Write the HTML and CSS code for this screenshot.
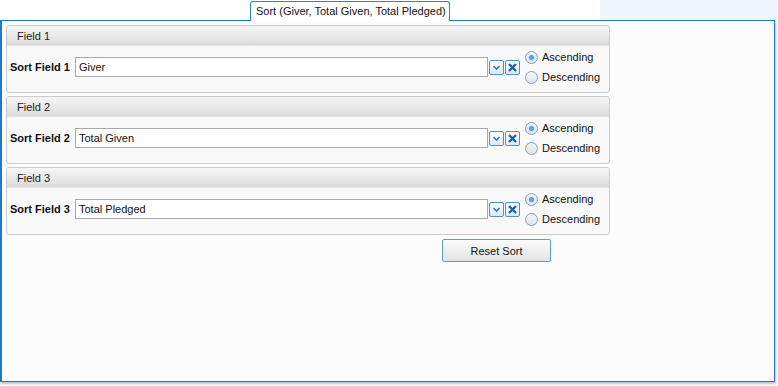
FILE: index.html
```html
<!DOCTYPE html>
<html lang="en">
<head>
    <meta charset="UTF-8">
    <title>Sort</title>
    <link rel="stylesheet" href="styles.css">
</head>
<body>
    <div class="topbar">
        <div class="tab-gap"></div>
        <div class="tab">Sort (Giver, Total Given, Total Pledged)</div>
        <div class="tab-fill"></div>
        <div class="tab-strip"></div>
    </div>

    <div class="panel">
        <div class="group">
            <div class="group-header">Field 1</div>
            <div class="group-body">
                <label class="field-label">Sort Field 1</label>
                <div class="combo">Giver</div>
                <span class="icon-btn"><svg width="13" height="13" viewBox="0 0 13 13"><path d="M3.5 5 L6.5 8 L9.5 5" fill="none" stroke="#2c7cc0" stroke-width="1.6"/></svg></span>
                <span class="icon-btn"><svg width="13" height="13" viewBox="0 0 13 13"><path d="M3 3 L10 10 M10 3 L3 10" fill="none" stroke="#1b63a8" stroke-width="2.4"/></svg></span>
                <div class="radios">
                    <div class="radio-row"><span class="radio checked"></span>Ascending</div>
                    <div class="radio-row"><span class="radio"></span>Descending</div>
                </div>
            </div>
        </div>

        <div class="group">
            <div class="group-header">Field 2</div>
            <div class="group-body">
                <label class="field-label">Sort Field 2</label>
                <div class="combo">Total Given</div>
                <span class="icon-btn"><svg width="13" height="13" viewBox="0 0 13 13"><path d="M3.5 5 L6.5 8 L9.5 5" fill="none" stroke="#2c7cc0" stroke-width="1.6"/></svg></span>
                <span class="icon-btn"><svg width="13" height="13" viewBox="0 0 13 13"><path d="M3 3 L10 10 M10 3 L3 10" fill="none" stroke="#1b63a8" stroke-width="2.4"/></svg></span>
                <div class="radios">
                    <div class="radio-row"><span class="radio checked"></span>Ascending</div>
                    <div class="radio-row"><span class="radio"></span>Descending</div>
                </div>
            </div>
        </div>

        <div class="group">
            <div class="group-header">Field 3</div>
            <div class="group-body">
                <label class="field-label">Sort Field 3</label>
                <div class="combo">Total Pledged</div>
                <span class="icon-btn"><svg width="13" height="13" viewBox="0 0 13 13"><path d="M3.5 5 L6.5 8 L9.5 5" fill="none" stroke="#2c7cc0" stroke-width="1.6"/></svg></span>
                <span class="icon-btn"><svg width="13" height="13" viewBox="0 0 13 13"><path d="M3 3 L10 10 M10 3 L3 10" fill="none" stroke="#1b63a8" stroke-width="2.4"/></svg></span>
                <div class="radios">
                    <div class="radio-row"><span class="radio checked"></span>Ascending</div>
                    <div class="radio-row"><span class="radio"></span>Descending</div>
                </div>
            </div>
        </div>

        <div class="actions">
            <button class="reset-btn">Reset Sort</button>
        </div>
    </div>
</body>
</html>
```

FILE: styles.css
```css
* {
    margin: 0;
    padding: 0;
    box-sizing: border-box;
}

body {
    font-family: 'Liberation Sans', Arial, sans-serif;
    font-size: 11px;
    color: #111;
    background: #fff;
    width: 778px;
    height: 386px;
    overflow: hidden;
}

.topbar {
    display: flex;
    height: 20px;
    padding-top: 1px;
}

.tab-gap {
    width: 250px;
}

.tab {
    position: relative;
    z-index: 1;
    width: 200px;
    height: 20px;
    background: #fff;
    border: 1px solid #2a86c8;
    border-bottom: none;
    border-radius: 3px 3px 0 0;
    padding: 3px 0 0 5px;
    white-space: nowrap;
}

.tab-fill {
    width: 150px;
}

.tab-strip {
    flex: 1;
    background: #eef5fd;
    margin-top: -1px;
}

.panel {
    width: 775px;
    height: 362px;
    background: #fcfcfc;
    border: 1px solid #1f7cc0;
    border-left-width: 2px;
    box-shadow: 1px 2px 2px rgba(60, 80, 110, 0.35);
    padding: 4px 0 0 4px;
}

.group {
    width: 604px;
    height: 68px;
    margin-bottom: 3px;
    border: 1px solid #cbcbcb;
    border-radius: 3px;
    background: #f9f9f9;
    overflow: hidden;
}

.group-header {
    height: 20px;
    padding: 4px 0 0 10px;
    color: #222;
    background: linear-gradient(#f6f6f6, #dcdcdc);
    border-bottom: 1px solid #e4e4e4;
}

.group-body {
    display: flex;
    align-items: center;
    height: 46px;
    padding: 0 0 4px 3px;
}

.field-label {
    font-weight: bold;
    width: 65px;
    white-space: nowrap;
}

.combo {
    width: 413px;
    height: 20px;
    border: 1px solid #a9a9a9;
    background: #fff;
    padding: 3px 0 0 3px;
    margin-right: 1px;
}

.icon-btn {
    display: flex;
    align-items: center;
    justify-content: center;
    width: 15px;
    height: 15px;
    margin-right: 1px;
    border: 1px solid #4a96d0;
    border-radius: 2px;
    background: linear-gradient(#ffffff, #dde9f5);
}

.radios {
    margin-left: 4px;
    display: flex;
    flex-direction: column;
}

.radio-row {
    display: flex;
    align-items: center;
    height: 20px;
    gap: 4px;
}

.radio {
    position: relative;
    width: 13px;
    height: 13px;
    border-radius: 50%;
    border: 1px solid #8a9fb6;
    background: linear-gradient(#f4f6f8, #dfe4ea);
}

.radio.checked::after {
    content: "";
    position: absolute;
    left: 3px;
    top: 3px;
    width: 5px;
    height: 5px;
    border-radius: 50%;
    background: #5aa2e2;
    box-shadow: 0 0 2px #8cc4f2;
}

.actions {
    padding: 1px 0 0 436px;
}

.reset-btn {
    width: 109px;
    height: 23px;
    font-family: inherit;
    font-size: 11px;
    color: #111;
    border: 1px solid #5c9bcf;
    border-radius: 2px;
    background: linear-gradient(#fbfbfb, #e4e4e4);
}
```
